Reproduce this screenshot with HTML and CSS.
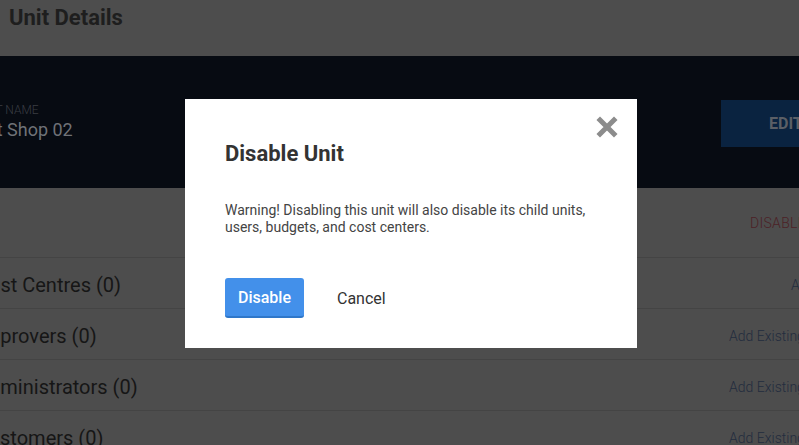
FILE: index.html
```html
<!DOCTYPE html>
<html lang="en">
<head>
    <meta charset="UTF-8">
    <meta name="viewport" content="width=device-width, initial-scale=1.0">
    <title>Unit Details</title>
    <link rel="stylesheet" href="styles.css">
</head>
<body>
    <div class="page">
        <header class="page-header">
            <h1>Unit Details</h1>
        </header>

        <section class="hero">
            <div class="hero-inner">
                <div class="unit-name">
                    <div class="label">Unit Name</div>
                    <div class="value">Test Shop 02</div>
                </div>
                <button class="edit-btn">EDIT</button>
            </div>
        </section>

        <div class="content">
            <div class="status-row">
                <span class="disable-link">DISABLE UNIT</span>
            </div>
            <div class="row">
                <span class="row-title">Cost Centres (0)</span>
                <span class="row-action first">Add New</span>
            </div>
            <div class="row">
                <span class="row-title">Approvers (0)</span>
                <span class="row-action">Add Existing</span>
            </div>
            <div class="row">
                <span class="row-title">Administrators (0)</span>
                <span class="row-action">Add Existing</span>
            </div>
            <div class="row">
                <span class="row-title">Customers (0)</span>
                <span class="row-action">Add Existing</span>
            </div>
        </div>
    </div>

    <div class="modal">
        <button class="modal-close" aria-label="Close">
            <svg width="22" height="22" viewBox="0 0 22 22">
                <path d="M4 4 L18 18 M18 4 L4 18" stroke="#8c8c8c" stroke-width="5" stroke-linecap="square" fill="none"/>
            </svg>
        </button>
        <h2 class="modal-title">Disable Unit</h2>
        <p class="modal-text">Warning! Disabling this unit will also disable its child units, users, budgets, and cost centers.</p>
        <div class="modal-actions">
            <button class="btn-primary">Disable</button>
            <button class="btn-link">Cancel</button>
        </div>
    </div>
</body>
</html>
```

FILE: styles.css
```css
* {
    margin: 0;
    padding: 0;
    box-sizing: border-box;
}

body {
    font-family: Roboto, "Liberation Sans", sans-serif;
    background: #4d4d4d;
    overflow: hidden;
    width: 799px;
    height: 445px;
}

button {
    font-family: inherit;
    border: none;
    background: none;
    cursor: pointer;
}

/* dimmed page behind the dialog */
.page {
    width: 799px;
}

.page-header {
    height: 56px;
    padding: 5px 9px 0;
}

.page-header h1 {
    font-size: 22px;
    font-weight: 700;
    line-height: 26px;
    color: #1e1e1e;
}

.hero {
    height: 132px;
    background: #070b12;
}

.hero-inner {
    display: flex;
    align-items: center;
    justify-content: space-between;
    height: 100%;
    margin-left: -24px;
    margin-right: -80px;
}

.unit-name .label {
    font-size: 12px;
    font-weight: 300;
    text-transform: uppercase;
    color: #3a3d43;
    line-height: 14px;
}

.unit-name .value {
    font-size: 18px;
    color: #6f7277;
    line-height: 22px;
    margin-top: 2px;
    margin-left: -8px;
}

.edit-btn {
    width: 158px;
    height: 47px;
    background: #0a2340;
    color: #5b5f66;
    font-size: 16px;
    font-weight: 700;
    text-align: left;
    padding-left: 48px;
    margin-top: 3px;
}

.content {
    margin-left: -24px;
    margin-right: -80px;
}

.status-row {
    height: 70px;
    display: flex;
    align-items: center;
    padding-left: 774px;
    border-bottom: 1px solid #444;
}

.disable-link {
    font-size: 14px;
    font-weight: 300;
    letter-spacing: 0.3px;
    color: #4c2126;
    white-space: nowrap;
}

.row {
    height: 51px;
    display: grid;
    grid-template-columns: 753px 1fr;
    align-items: center;
    padding-top: 3px;
    border-bottom: 1px solid #444;
}

.row-title {
    font-size: 20px;
    color: #161616;
}

.row-action {
    font-size: 14px;
    font-weight: 300;
    color: #232c3e;
    white-space: nowrap;
}

.row-action.first {
    padding-left: 62px;
}

/* dialog */
.modal {
    position: fixed;
    left: 185px;
    top: 99px;
    width: 452px;
    height: 249px;
    background: #fff;
    padding: 42px 40px 30px;
}

.modal-close {
    position: absolute;
    top: 17px;
    right: 19px;
    width: 22px;
    height: 22px;
    display: flex;
}

.modal-title {
    font-size: 22px;
    font-weight: 700;
    line-height: 26px;
    color: #333;
}

.modal-text {
    margin-top: 35px;
    font-size: 14px;
    line-height: 17px;
    color: #444;
}

.modal-actions {
    display: flex;
    align-items: center;
    gap: 33px;
    margin-top: 42px;
}

.btn-primary {
    width: 79px;
    height: 40px;
    background: #4390ea;
    border-bottom: 2px solid #2f77c9;
    border-radius: 3px;
    color: #fff;
    font-size: 16px;
    font-weight: 500;
}

.btn-link {
    font-size: 16px;
    color: #333;
}
```
